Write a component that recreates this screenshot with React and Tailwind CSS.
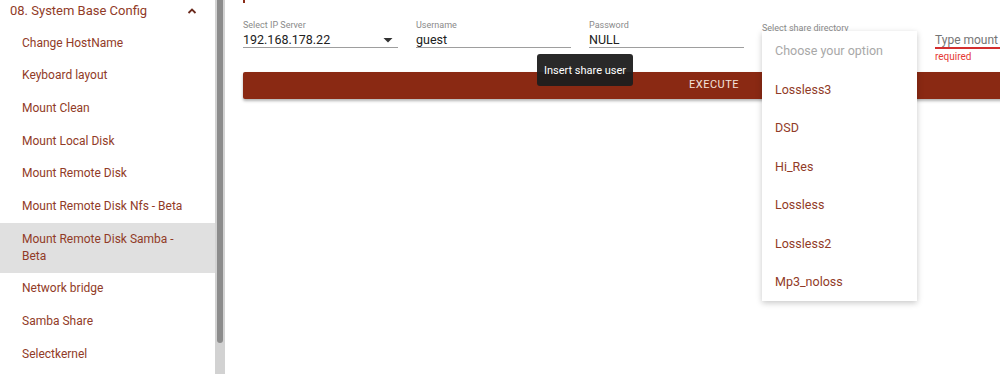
import React from 'react';

const brown = 'text-[#913b27]';

const menuItems = [
  'Change HostName',
  'Keyboard layout',
  'Mount Clean',
  'Mount Local Disk',
  'Mount Remote Disk',
  'Mount Remote Disk Nfs - Beta',
  'Mount Remote Disk Samba - Beta',
  'Network bridge',
  'Samba Share',
  'Selectkernel',
];

const shares = ['Lossless3', 'DSD', 'Hi_Res', 'Lossless', 'Lossless2', 'Mp3_noloss'];

const Sidebar = () => {
  return (
    <div className="flex h-full shrink-0">
      <div className="w-[215px] bg-white">
        <div className={`h-[27px] flex items-start pt-[2px] pl-[10px] pr-[18px] justify-between text-[13px] leading-[17px] ${brown}`}>
          <span>08. System Base Config</span>
          <svg width="10" height="8" viewBox="0 0 10 8" className="mt-[5px]">
            <polyline points="1.5,6 5,2.5 8.5,6" fill="none" stroke="#6b2a1d" strokeWidth="1.8" />
          </svg>
        </div>
        {menuItems.map((item) => {
          const active = item === 'Mount Remote Disk Samba - Beta';
          return (
            <div
              key={item}
              className={`pl-[22px] pr-[18px] text-[12px] leading-[17px] ${brown} ${
                active ? 'bg-[#e0e0e0] py-[8px]' : 'h-[32.6px] flex items-center whitespace-nowrap'
              }`}
            >
              {item}
            </div>
          );
        })}
      </div>
      <div className="w-[10px] bg-[#d2d2d2] flex justify-center">
        <div className="w-[6px] h-[343px] bg-[#8c8c8c] rounded-b-[3px]"></div>
      </div>
    </div>
  );
};

const Field = ({ label, value, arrow }) => {
  return (
    <div className="w-[155px] shrink-0 flex flex-col">
      <div className="text-[9px] leading-[11px] text-[#8a8a8a]">{label}</div>
      <div className="h-[17px] pt-[2px] flex items-center justify-between text-[12.5px] text-[#212121] border-b border-[#9e9e9e]">
        <span>{value}</span>
        {arrow && (
          <svg width="10" height="6" viewBox="0 0 10 6" className="mr-[5px]">
            <polygon points="0.5,1 9.5,1 5,5.5" fill="#333" />
          </svg>
        )}
      </div>
    </div>
  );
};

export default function App() {
  return (
    <div className="w-[1000px] h-[374px] flex bg-white overflow-hidden" style={{ fontFamily: 'Roboto, "Liberation Sans", sans-serif' }}>
      <Sidebar />
      <div className="relative flex-1 overflow-hidden pl-[18px]">
        <div className="h-[3px] w-[2px] bg-[#8b2e1a]"></div>
        <div className="flex gap-[18px] pt-[17px]">
          <Field label="Select IP Server" value="192.168.178.22" arrow />
          <Field label="Username" value="guest" />
          <Field label="Password" value="NULL" />
          <div className="w-[155px] shrink-0 flex flex-col">
            <div className="text-[9px] leading-[11px] text-[#8a8a8a] pt-[3px]">Select share directory</div>
          </div>
          <div className="w-[155px] shrink-0 flex flex-col">
            <div className="h-[11px]"></div>
            <div className="h-[18px] pt-[2px] flex items-center text-[12px] text-[#757575] border-b-2 border-[#d32f2f] whitespace-nowrap">
              Type mount folder
            </div>
            <div className="text-[10px] leading-[14px] pt-[1px] text-[#e53935]">required</div>
          </div>
        </div>
        <div className="mt-[8px] w-[942px] h-[27px] bg-[#8a2913] rounded-[2px] shadow-[0_2px_3px_rgba(0,0,0,0.3)] flex items-center justify-center text-[11px] tracking-[0.5px] text-[#f3e1db]">
          EXECUTE
        </div>

        <div className="absolute left-[312px] top-[54px] w-[96px] h-[32px] pt-[2px] rounded-[3px] bg-[#1e1e1e]/95 flex items-center justify-center text-[11px] text-white">
          Insert share user
        </div>

        <div className="absolute left-[537px] top-[31px] w-[155px] bg-white shadow-[0_2px_6px_rgba(0,0,0,0.22)]">
          <div className="h-[38.5px] pt-[3px] flex items-center pl-[13px] text-[12.5px] text-[#a8a8a8]">Choose your option</div>
          {shares.map((s) => (
            <div key={s} className={`h-[38.5px] pt-[3px] flex items-center pl-[13px] text-[12.5px] ${brown}`}>
              {s}
            </div>
          ))}
        </div>
      </div>
    </div>
  );
}
